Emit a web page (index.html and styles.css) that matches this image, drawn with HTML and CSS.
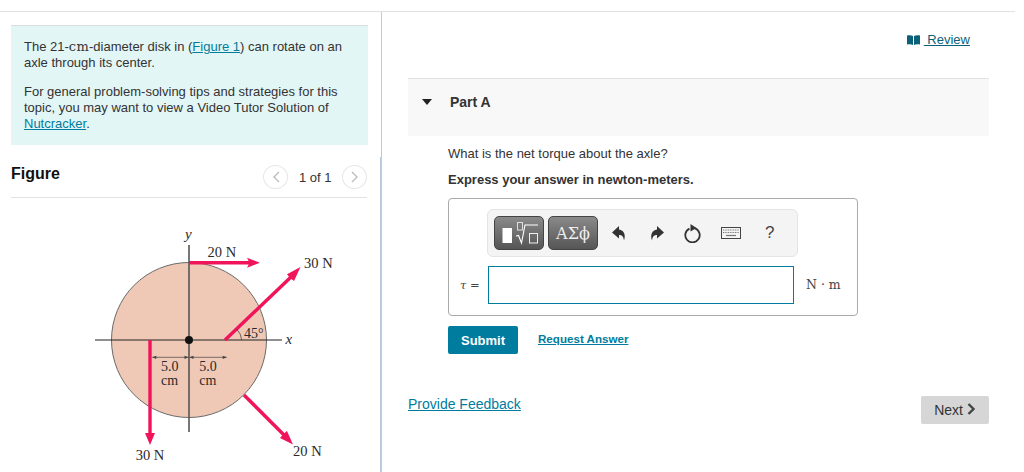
FILE: index.html
```html
<!DOCTYPE html>
<html lang="en">
<head>
<meta charset="utf-8">
<title>Part A</title>
<link rel="stylesheet" href="styles.css">
</head>
<body>
<div class="page">
  <aside class="left">
    <div class="intro">
      <p>The 21-<span class="math">cm</span>-diameter disk in (<a href="#">Figure 1</a>) can rotate on an axle through its center.</p>
      <p>For general problem-solving tips and strategies for this topic, you may want to view a Video Tutor Solution of <a href="#">Nutcracker</a>.</p>
    </div>
    <div class="fig-head">
      <h2>Figure</h2>
      <div class="pager">
        <span class="round"><svg width="8" height="12" viewBox="0 0 8 12"><path d="M7 1 2 6l5 5" fill="none" stroke="#bbb" stroke-width="1.3"/></svg></span>
        <span class="pager-text">1 of 1</span>
        <span class="round"><svg width="8" height="12" viewBox="0 0 8 12"><path d="M1 1l5 5-5 5" fill="none" stroke="#bbb" stroke-width="1.3"/></svg></span>
      </div>
    </div>
    <div class="figure">
      <svg class="diagram" width="260" height="240" viewBox="0 0 260 240">
        <circle cx="99" cy="115" r="77.5" fill="#efc9b6" stroke="#6a6a6a" stroke-width="1"/>
        <line x1="99" y1="20" x2="99" y2="207" stroke="#555" stroke-width="1.6"/>
        <line x1="5" y1="115" x2="192" y2="115" stroke="#222" stroke-width="1.2"/>
        <circle cx="99" cy="115" r="4" fill="#111"/>
        <path d="M62.300 132.300H98.500M99.500 132.300H136.700" stroke="#444" stroke-width=".7"/>
        <path d="M62.300 132.300l4-1.600v3.200zM98.500 132.300l-4-1.600v3.200zM99.500 132.300l4-1.600v3.200zM136.700 132.300l-4-1.600v3.200z" fill="#444"/>
        <path d="M99 37.700H160" stroke="#f0145a" stroke-width="3.400"/>
        <path d="M170 37.700l-13-5 2.500 5-2.500 5z" fill="#f0145a"/>
        <path d="M135 115 201 52" stroke="#f0145a" stroke-width="3.400"/>
        <path d="M210.500 42 197 49.300l3 3.700 4 3z" fill="#f0145a"/>
        <path d="M60 115V210" stroke="#f0145a" stroke-width="3.400"/>
        <path d="M60 220l-5-12h10z" fill="#f0145a"/>
        <path d="M154 170 194 210" stroke="#f0145a" stroke-width="3.400"/>
        <path d="M203 219.500 197 206l-3.500 3-3.500 4z" fill="#f0145a"/>
        <path d="M151.700 115a18 18 0 0 0-5-11" fill="none" stroke="#333" stroke-width=".7"/>
        <text class="it" x="95" y="14">y</text>
        <text class="it" x="195.500" y="119">x</text>
        <text class="force" x="117.500" y="32">20 N</text>
        <text class="force" x="214" y="43">30 N</text>
        <text x="154" y="113">45°</text>
        <text x="71" y="145.500">5.0</text>
        <text x="71" y="160">cm</text>
        <text x="109.300" y="145.500">5.0</text>
        <text x="109.300" y="160">cm</text>
        <text class="force" x="45.700" y="235">30 N</text>
        <text class="force" x="203" y="231">20 N</text>
      </svg>
    </div>
  </aside>
  <div class="rail"><div class="thumb"></div></div>
  <main class="right">
    <div class="review-row">
      <svg class="book" width="13" height="10" viewBox="0 0 13 10"><path d="M0 .5C2 0 4.500 0 6 1v9C4.500 9 2 9 0 9.500zM13 .5C11 0 8.500 0 7 1v9c1.500-1 4-1 6-.5z" fill="#0a6178"/></svg>
      <a class="review" href="#">&nbsp;Review</a>
    </div>
    <section class="part-head">
      <span class="caret"></span>
      <h3>Part A</h3>
    </section>
    <div class="part-body">
      <p class="question">What is the net torque about the axle?</p>
      <p class="express">Express your answer in newton-meters.</p>
      <div class="answer">
        <div class="toolbar">
          <span class="tool-btn tool-a">
            <svg width="38" height="28" viewBox="0 0 38 28"><rect x="2.500" y="9" width="9.500" height="15" fill="#fff"/><rect x="17.500" y="3.500" width="5" height="7.500" fill="none" stroke="#ddd"/><path d="M16 17l2.500-.5 3 7.500 3.500-18h13" fill="none" stroke="#fff" stroke-width="1.100"/><rect x="29.500" y="14.500" width="8" height="9.500" fill="none" stroke="#eee"/></svg>
          </span>
          <span class="tool-btn tool-b">ΑΣϕ</span>
          <svg class="ico undo" width="14" height="15" viewBox="0 0 14 15"><path d="M7 0 0 6.500l7 6V9c2.500 0 4.500 1 5 5.500 2-5.500 0-10.500-5-11z" fill="#333"/></svg>
          <svg class="ico redo" width="14" height="15" viewBox="0 0 14 15"><path d="M7 0l7 6.500-7 6V9c-2.500 0-4.500 1-5 5.500-2-5.500 0-10.500 5-11z" fill="#333"/></svg>
          <svg class="ico reset" width="17" height="19" viewBox="0 0 17 19"><path d="M11 4.400a7.200 7.200 0 1 1-5.500.2" fill="none" stroke="#333" stroke-width="1.800"/><path d="M6.500 0l6 4-6 3.500z" fill="#333"/></svg>
          <svg class="ico kbd" width="20" height="12" viewBox="0 0 20 12"><rect x=".5" y=".5" width="19" height="11" fill="#f4f4f4" stroke="#444"/><path d="M2 3h16M2 5.500h16" stroke="#777" stroke-width="1.200" stroke-dasharray="1 .7"/><path d="M5 8.500h10" stroke="#777" stroke-width="1.200"/></svg>
          <span class="help">?</span>
        </div>
        <div class="input-row">
          <span class="label"><i>τ</i> =</span>
          <span class="input"></span>
          <span class="unit">N · m</span>
        </div>
      </div>
      <div class="actions">
        <button class="submit" type="button">Submit</button>
        <a class="request" href="#">Request Answer</a>
      </div>
    </div>
    <div class="footer">
      <a class="feedback" href="#">Provide Feedback</a>
      <button class="next" type="button">Next <svg width="9" height="12" viewBox="0 0 9 12"><path d="M1.500 1l5 5-5 5" fill="none" stroke="#444" stroke-width="2.400"/></svg></button>
    </div>
  </main>
</div>
</body>
</html>
```

FILE: styles.css
```css
* { box-sizing: border-box; }
html, body { margin: 0; height: 100%; overflow: hidden; background: #fff; }
body { font-family: "Liberation Sans", Arial, sans-serif; font-size: 13px; color: #333; padding-right: 9px; }
p { margin: 0; }
a { color: #007c9e; text-decoration: underline; }

.page { display: flex; height: 461px; margin-top: 11px; border-top: 1px solid #e2e2e2; overflow: hidden; }

.left { width: 380px; flex: none; padding: 13px 0 0 11px; }
.intro { width: 357px; height: 120px; background: #e3f6f6; border-top: 1px solid #dcdcdc; padding: 13px 13px 0 13px; line-height: 16px; }
.intro p + p { margin-top: 13px; }
.math { font-family: "DejaVu Serif", serif; font-size: 13px; letter-spacing: .3px; }

.fig-head { display: flex; justify-content: space-between; align-items: center; width: 356px; height: 53px; border-bottom: 1px solid #e2e2e2; padding-top: 12px; }
.fig-head h2 { margin: 0 0 6px; font-size: 16px; font-weight: bold; color: #111; }
.pager { display: flex; align-items: center; gap: 10.500px; color: #333; }
.round { width: 25px; height: 24px; border: 1px solid #e6e6e6; border-radius: 50%; display: flex; align-items: center; justify-content: center; }
.pager-text { font-size: 13px; }

.figure { padding-left: 79px; padding-top: 27px; }
.diagram { display: block; }
.diagram text { font-family: "Liberation Serif", serif; font-size: 14px; fill: #2a2a2a; }
.diagram .force { font-size: 14.500px; }
.diagram .it { font-style: italic; font-size: 15px; }

.rail { flex: none; width: 2px; background: linear-gradient(to right, transparent 50%, #c4c9d0 50%); }
.thumb { height: calc(100% - 145px); margin-top: 145px; background: #b8cde0; }

.right { flex: 1; padding: 0 26px; }
.review-row { display: flex; justify-content: flex-end; align-items: flex-start; height: 66px; padding: 20px 19px 0 0; }
.book { margin: 3px 4px 0 0; }
.review { color: #0a6178; font-size: 13px; line-height: 16px; }

.part-head { display: flex; align-items: flex-start; height: 58px; background: #f8f8f8; border-top: 1px solid #e2e2e2; padding-top: 15px; }
.caret { width: 0; height: 0; border-left: 5.500px solid transparent; border-right: 5.500px solid transparent; border-top: 6px solid #222; margin: 5px 0 0 14px; }
.part-head h3 { margin: 0 0 0 18px; font-size: 14px; font-weight: bold; color: #333; }

.part-body { padding: 0 0 0 40px; }
.question { margin-top: 10px; line-height: 16px; }
.express { margin-top: 10px; line-height: 16px; font-weight: bold; }

.answer { width: 410px; height: 118px; margin-top: 10px; border: 1px solid #aaa; border-radius: 4px; padding: 10px 0 0 38px; }
.toolbar { display: flex; align-items: center; width: 311px; height: 48px; background: #f4f4f4; border: 1px solid #e4e4e4; border-radius: 6px; padding-left: 6px; }
.tool-btn { display: flex; align-items: center; justify-content: center; height: 34px; border: 1px solid #444; border-radius: 5px; background: linear-gradient(#8a8a8a, #555); color: #eee; }
.tool-a { width: 50px; }
.tool-b { width: 50px; margin-left: 4px; font-family: "DejaVu Serif", serif; font-size: 16px; }
.ico { flex: none; }
.undo { margin-left: 14px; }
.redo { margin-left: 24px; }
.reset { margin-left: 20px; }
.kbd { margin-left: 20px; }
.help { margin-left: 24px; font-size: 17px; color: #444; }

.input-row { display: flex; align-items: center; margin: 9px 0 0 -27px; }
.label { width: 20px; font-family: "DejaVu Serif", serif; font-size: 11.500px; color: #444; white-space: nowrap; }
.input { width: 306px; height: 38px; margin-left: 8px; border: 1px solid #007c9e; background: #fff; }
.unit { margin: -2px 0 0 12px; font-family: "DejaVu Serif", serif; font-size: 12.500px; color: #444; }

.actions { display: flex; align-items: center; margin-top: 10px; }
.submit { width: 70px; height: 28px; border: 0; border-radius: 2px; background: #007c9e; color: #fff; font: bold 13px "Liberation Sans", Arial, sans-serif; }
.request { margin: -4px 0 0 20px; font-size: 11.600px; font-weight: bold; }

.footer { display: flex; justify-content: space-between; align-items: flex-start; margin-top: 40px; }
.feedback { margin-top: 2px; font-size: 14px; line-height: 16px; }
.next { width: 68px; height: 28px; margin-top: 2px; border: 0; border-radius: 2px; background: #d6d6d6; color: #333; font: 14px "Liberation Sans", Arial, sans-serif; }
```
